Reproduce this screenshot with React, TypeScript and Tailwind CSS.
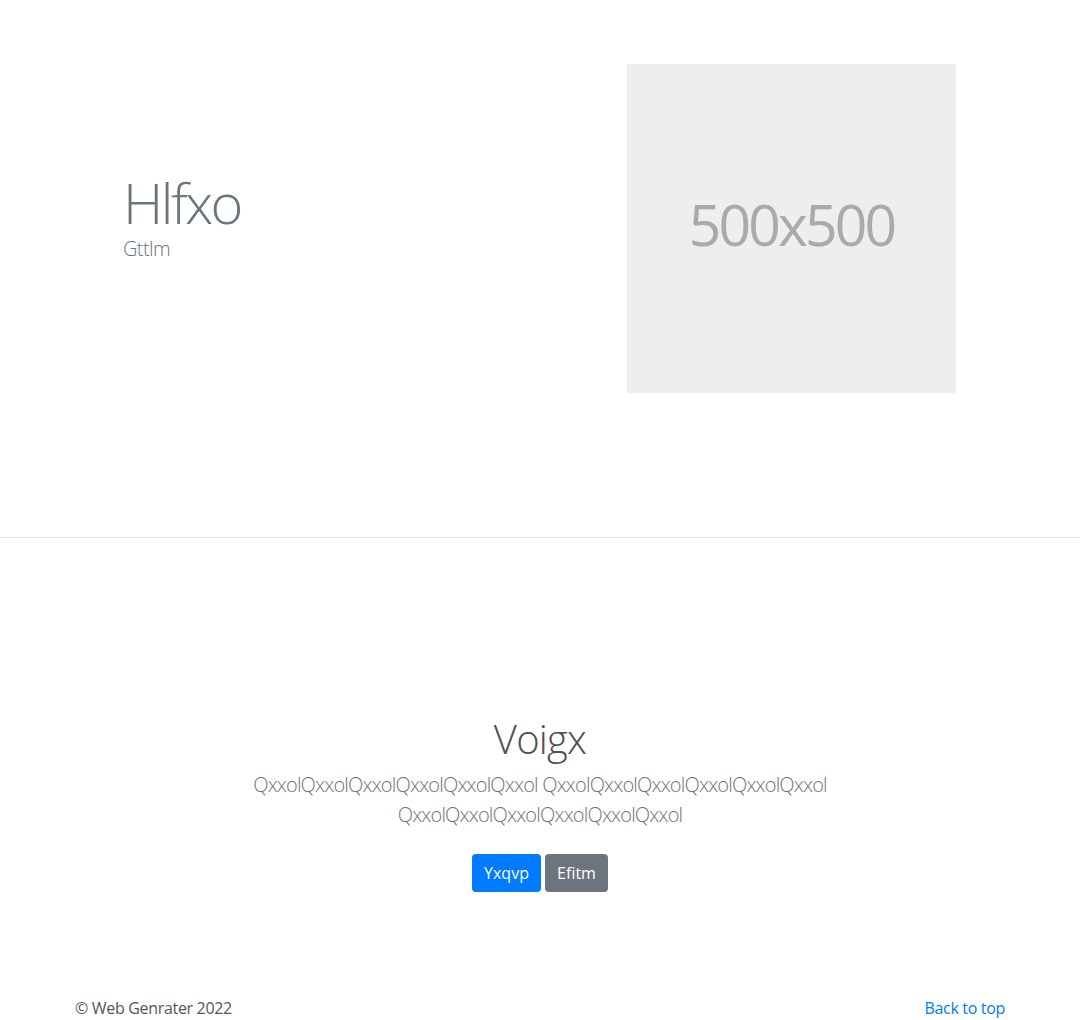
export default function App() {
  return (
    <div className="min-h-screen bg-white font-['Open_Sans','Noto_Sans',sans-serif] text-[#212529]">
      <section className="h-[538px] border-b border-[#e5e5e5]">
        <div className="mx-auto flex w-[930px]">
          <div className="w-[552px] pl-[48px] pt-[172px]">
            <h1 className="text-[56px] leading-[60px] font-light tracking-[-0.045em] text-[#6c757d]">Hlfxo</h1>
            <p className="mt-[2px] text-[20px] leading-[1.5] font-light tracking-[-0.03em] text-[#6c757d]">Gttlm</p>
          </div>
          <div className="pt-[64px]">
            <div className="flex h-[329px] w-[329px] items-center justify-center bg-[#eeeeee]">
              <span className="mb-[8px] text-[57px] leading-none tracking-[-0.05em] text-[#aaaaaa]">500x500</span>
            </div>
          </div>
        </div>
      </section>

      <section className="pt-[177px] text-center">
        <h1 className="text-[40px] leading-[1.2] font-light tracking-[-0.02em] text-[#505050]">Voigx</h1>
        <p className="mx-auto mt-[7px] max-w-[610px] text-[20px] leading-[1.5] font-light tracking-[-0.04em] text-[#6c757d]">
          QxxolQxxolQxxolQxxolQxxolQxxol QxxolQxxolQxxolQxxolQxxolQxxol QxxolQxxolQxxolQxxolQxxolQxxol
        </p>
        <div className="mt-[24px] flex justify-center gap-[4px]">
          <button className="h-[38px] w-[69px] rounded-[4px] bg-[#007bff] text-[16px] text-white">Yxqvp</button>
          <button className="h-[38px] w-[63px] rounded-[4px] bg-[#6c757d] text-[16px] text-white">Efitm</button>
        </div>
      </section>

      <footer className="mx-auto flex w-[930px] justify-between pt-[104px] pb-12 text-[16px] leading-[1.5] tracking-[-0.02em]">
        <p className="text-[#555555]">© Web Genrater 2022</p>
        <a href="#" className="text-[#007bff]">Back to top</a>
      </footer>
    </div>
  )
}
